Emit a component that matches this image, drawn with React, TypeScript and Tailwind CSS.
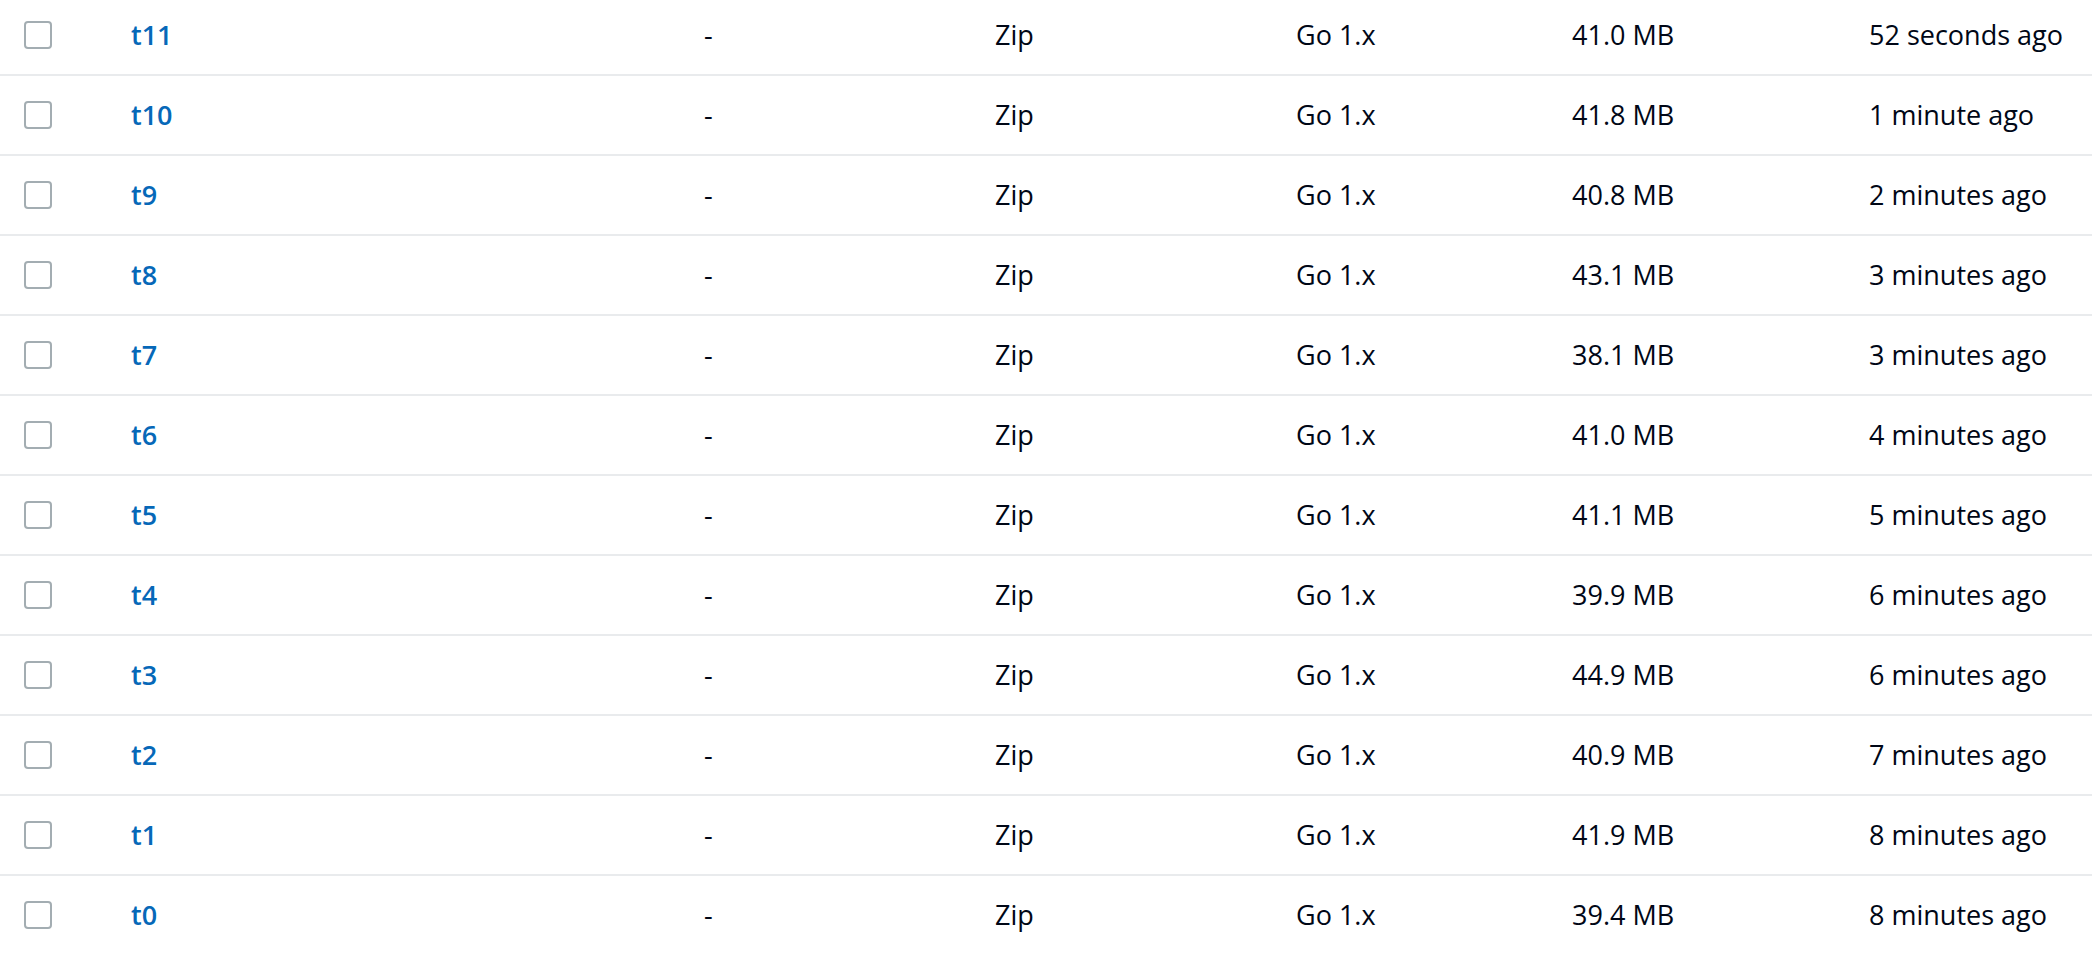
const rows = [
    { name: 't11', size: '41.0 MB', modified: '52 seconds ago' },
    { name: 't10', size: '41.8 MB', modified: '1 minute ago' },
    { name: 't9', size: '40.8 MB', modified: '2 minutes ago' },
    { name: 't8', size: '43.1 MB', modified: '3 minutes ago' },
    { name: 't7', size: '38.1 MB', modified: '3 minutes ago' },
    { name: 't6', size: '41.0 MB', modified: '4 minutes ago' },
    { name: 't5', size: '41.1 MB', modified: '5 minutes ago' },
    { name: 't4', size: '39.9 MB', modified: '6 minutes ago' },
    { name: 't3', size: '44.9 MB', modified: '6 minutes ago' },
    { name: 't2', size: '40.9 MB', modified: '7 minutes ago' },
    { name: 't1', size: '41.9 MB', modified: '8 minutes ago' },
    { name: 't0', size: '39.4 MB', modified: '8 minutes ago' },
];

const App = () => {
    return (
        <div className="h-[954px] overflow-hidden bg-white font-['Open_Sans',sans-serif] text-[27px] text-[#000716]">
            <div className="-mt-[4px]">
                {rows.map((row) => (
                    <div
                        key={row.name}
                        className="grid h-[80px] grid-cols-[131px_573px_291px_301px_276px_297px_1fr] items-center border-b-2 border-[#e9ebed]"
                    >
                        <div className="pl-6">
                            <div className="h-[28px] w-[28px] rounded-[4px] border-2 border-[#a3adb2] bg-white" />
                        </div>
                        <a href="#" className="font-semibold text-[#0668b8]">
                            {row.name}
                        </a>
                        <div>-</div>
                        <div>Zip</div>
                        <div>Go 1.x</div>
                        <div>{row.size}</div>
                        <div className="whitespace-nowrap">{row.modified}</div>
                    </div>
                ))}
            </div>
        </div>
    );
};

export default App;
